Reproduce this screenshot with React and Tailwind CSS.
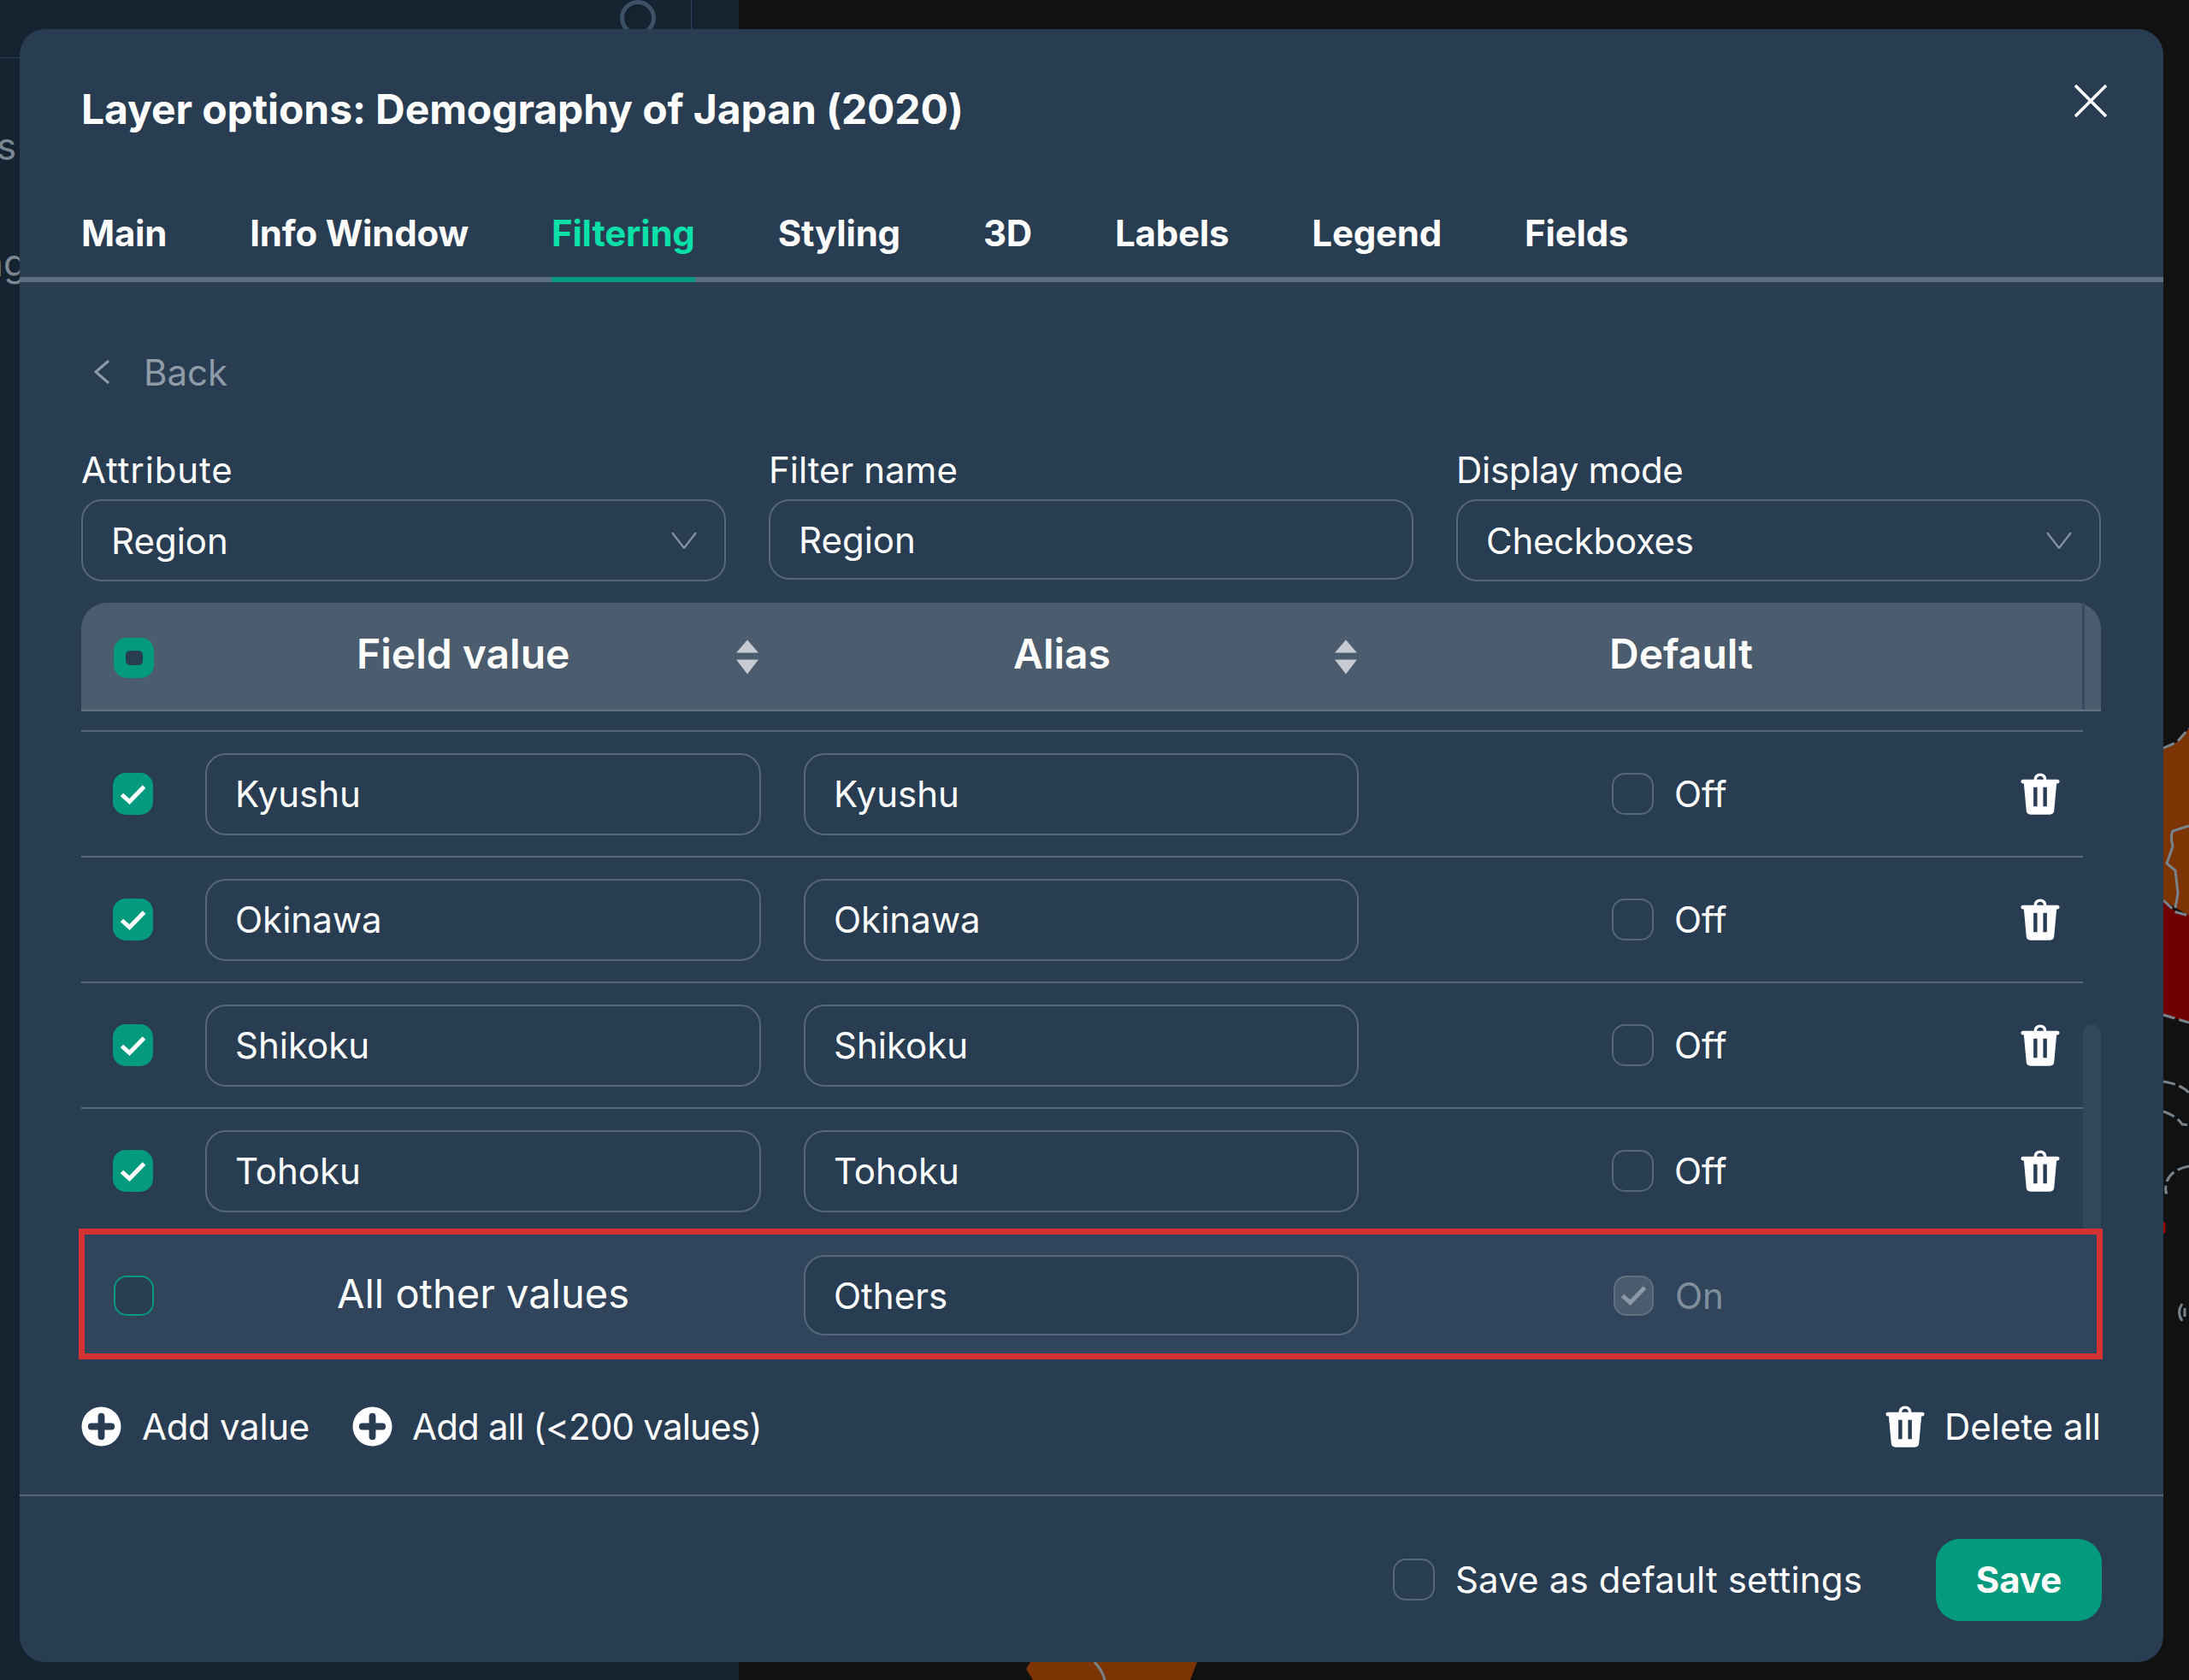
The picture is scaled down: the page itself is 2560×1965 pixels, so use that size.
const F = "font-['Inter','Noto_Sans',sans-serif]";

function Check({ className = "" }) {
  return (
    <svg viewBox="0 0 30 24" className={className} fill="none" stroke="currentColor" strokeWidth="5">
      <path d="M2 12.5 L11 20.5 L28 3" />
    </svg>
  );
}

function Trash({ className = "" }) {
  return (
    <svg viewBox="0 0 46 50" className={className} fill="currentColor">
      <path fillRule="evenodd" d="M15.5 8 C15.5 3.5 18.5 0.5 23 0.5 C27.5 0.5 30.5 3.5 30.5 8 L43.5 8 C45 8 46 9 46 10.3 C46 11.7 45 12.7 43.5 12.7 L42.5 12.7 L39.6 45 C39.4 47.8 37.5 49.8 34.5 49.8 L11.5 49.8 C8.5 49.8 6.6 47.8 6.4 45 L3.5 12.7 L2.5 12.7 C1 12.7 0 11.7 0 10.3 C0 9 1 8 2.5 8 Z M19 8 L27 8 C27 5.5 25.5 3.8 23 3.8 C20.5 3.8 19 5.5 19 8 Z M15 17 L15 40 L19.5 40 L19.5 17 Z M26.5 17 L26.5 40 L31 40 L31 17 Z" />
    </svg>
  );
}

function PlusCircle() {
  return (
    <svg viewBox="0 0 48 48" className="w-[47px] h-[47px] shrink-0">
      <circle cx="24" cy="24" r="23.5" fill="#fff" />
      <path d="M24 12 V36 M12 24 H36" stroke="#283c52" strokeWidth="8" strokeLinecap="round" />
    </svg>
  );
}

function Sort({ className = "" }) {
  return (
    <svg viewBox="0 0 28 40" className={className} fill="#c6ccd2">
      <path d="M14 0 L27 15 L1 15 Z" />
      <path d="M1 23 L27 23 L14 40 Z" />
    </svg>
  );
}

function Chevron() {
  return (
    <svg viewBox="0 0 30 20" className="w-[30px] h-[20px] text-[#8593a0]" fill="none" stroke="currentColor" strokeWidth="2.2">
      <path d="M1 1 L15 19 L29 1" />
    </svg>
  );
}

function Field({ label, value, select, h = "h-[96px]", labelClass = "", valueClass = "" }) {
  return (
    <div className="flex-1 flex flex-col">
      <div className={`h-[59px] text-[42px] leading-[49px] text-white ${labelClass}`}>{label}</div>
      <div className={`${h} rounded-[24px] border-2 border-[#55687b] flex items-center justify-between pl-[33px] pr-[32px] text-[42px] text-white`}>
        <span className={valueClass}>{value}</span>
        {select && <Chevron />}
      </div>
    </div>
  );
}

function Input({ value, className = "" }) {
  return (
    <div className={`h-[96px] rounded-[24px] border-2 border-[#55687b] flex items-center pl-[33px] text-[42px] text-white ${className}`}>
      {value}
    </div>
  );
}

function Row({ name }) {
  return (
    <div className="h-[147px] border-t-2 border-[#55687b] flex items-center">
      <div className="w-[145px] pl-[37px] shrink-0">
        <div className="w-[47px] h-[49px] rounded-[15px] bg-[#049a7d] flex items-center justify-center text-white">
          <Check className="w-[31px] h-[24px]" />
        </div>
      </div>
      <Input value={name} className="w-[650px]" />
      <Input value={name} className="w-[649px] ml-[50px]" />
      <div className="w-[49px] h-[49px] ml-[296px] rounded-[15px] border-2 border-[#55687b]" />
      <span className="ml-[24px] w-[62px] text-[42px] text-white">Off</span>
      <Trash className="w-[46px] h-[49px] ml-[343px] text-white" />
    </div>
  );
}

export default function App() {
  return (
    <div className={`${F} relative w-[2560px] h-[1965px] overflow-hidden flex bg-[#111111]`}>
      <div className="w-[864px] h-full bg-[#15222f] relative">
        <div className="h-[68px] border-b border-[#22405c]" />
        <div className="absolute left-[725px] top-[0px] w-[42px] h-[42px] rounded-full border-[5px] border-[#3c5165]" />
        <div className="absolute left-[808px] top-0 w-px h-[34px] bg-[#2a4460]" />
        <span className="absolute left-[-4px] top-[138px] text-[44px] text-[#7b8792]">s</span>
        <span className="absolute left-[-22px] top-[274px] text-[44px] text-[#7b8792]">ng</span>
      </div>
      <svg className="flex-1 h-full" viewBox="864 0 1696 1965" fill="none">
        <path d="M2530 875 L2546 868 L2560 852 L2560 1071 L2530 1053 Z" fill="#7d3404" />
        <path d="M2530 1053 L2545 1067 L2560 1071 L2560 1196 L2530 1187 Z" fill="#700000" />
        <path d="M1205 1944 L1400 1944 L1392 1965 L1208 1965 L1200 1952 Z" fill="#7d3404" />
        <g stroke="#77838d" strokeWidth="3" strokeDasharray="14 5">
          <path d="M2530 875 L2546 868 L2560 852" />
          <path d="M2530 1187 L2560 1196" />
          <path d="M2530 1053 L2545 1067 L2560 1071" />
          <path d="M2530 1265 Q2550 1268 2560 1278" />
          <path d="M2530 1300 Q2545 1305 2552 1315 L2560 1316" />
          <path d="M2560 1364 Q2530 1370 2533 1395 L2535 1395" />
        </g>
        <path d="M2560 966 L2541 972 Q2538 978 2541 990 L2534 1010 L2544 1018 L2547 1045 L2544 1062" stroke="#77838d" strokeWidth="3" />
        <path d="M2552 1525 Q2545 1535 2552 1545 M2555 1530 L2555 1540" stroke="#77838d" strokeWidth="3" />
        <path d="M2531 1430 L2531 1442" stroke="#a00000" strokeWidth="3" />
        <path d="M1280 1944 Q1290 1955 1292 1965" stroke="#77838d" strokeWidth="3" />
      </svg>

      <div className="absolute left-[23px] top-[34px] w-[2507px] h-[1910px] rounded-[30px] bg-[#283c52] flex flex-col text-white">
        <div className="h-[296px] shrink-0 border-b-[6px] border-[#5b6e80] relative">
          <h1 className="absolute left-[72px] top-[62px] text-[48px] leading-[64px] font-bold tracking-[-0.1px]">
            Layer options: Demography of Japan (2020)
          </h1>
          <svg viewBox="0 0 40 40" className="absolute right-[66px] top-[65px] w-[38px] h-[38px]" stroke="#fff" strokeWidth="3.8" fill="none">
            <path d="M1 1 L39 39 M39 1 L1 39" />
          </svg>
          <div className="absolute left-[72px] top-[209px] flex gap-[97px] text-[42px] leading-[60px] font-bold tracking-[-0.2px]">
            <span>Main</span>
            <span>Info Window</span>
            <span className="relative text-[#0ae0a8]">
              Filtering
              <span className="absolute left-0 right-0 top-[81px] h-[6px] bg-[#049a7d]" />
            </span>
            <span>Styling</span>
            <span>3D</span>
            <span>Labels</span>
            <span>Legend</span>
            <span>Fields</span>
          </div>
        </div>

        <div className="flex-1 pl-[72px] pr-[73px] flex flex-col">
          <div className="flex items-center mt-[75px] h-[60px] text-[42px] text-[#8f9ba6]">
            <svg viewBox="0 0 20 30" className="w-[20px] h-[30px] ml-[14px]" fill="none" stroke="currentColor" strokeWidth="3">
              <path d="M18 2 L3 15 L18 28" />
            </svg>
            <span className="ml-[39px]">Back</span>
          </div>

          <div className="flex gap-[50px] mt-[60px]">
            <Field label="Attribute" value="Region" select labelClass="tracking-[0.9px]" />
            <Field label="Filter name" value="Region" h="h-[94px]" />
            <Field label="Display mode" value="Checkboxes" select labelClass="tracking-[-0.3px]" valueClass="tracking-[-0.3px]" />
          </div>

          <div className="mt-[25px] h-[127px] rounded-t-[30px] bg-[#4a5c6d] border-b-2 border-[#62727f] flex items-center pb-[6px] relative text-[48px] font-semibold">
            <div className="absolute left-[38px] top-[41px] w-[47px] h-[47px] rounded-[15px] bg-[#049a7d] flex items-center justify-center">
              <div className="w-[20px] h-[17px] rounded-[5px] bg-[#283c52]" />
            </div>
            <span className="absolute left-[322px]">Field value</span>
            <Sort className="absolute left-[765px] top-[43px] w-[28px] h-[41px]" />
            <span className="absolute left-[1090px]">Alias</span>
            <Sort className="absolute left-[1465px] top-[43px] w-[28px] h-[41px]" />
            <span className="absolute left-[1787px]">Default</span>
            <div className="absolute left-[2340px] top-0 bottom-0 w-[3px] bg-[#334a60]" />
          </div>

          <div className="relative mt-[22px]">
            <div className="absolute right-0 top-[344px] w-[21px] h-[390px] bg-[#32475c] rounded-t-[10px]" />
            <div className="w-[2341px]">
              <Row name="Kyushu" />
              <Row name="Okinawa" />
              <Row name="Shikoku" />
              <Row name="Tohoku" />
            </div>
          </div>

          <div className="mx-[-3px] mr-[-2px] -mt-[5px] h-[153px] border-[7px] border-[#d33333] bg-[#30455b] flex items-center pt-[3px] relative z-10">
            <div className="w-[141px] pl-[34px] shrink-0">
              <div className="w-[47px] h-[47px] rounded-[15px] border-2 border-[#049a7d] bg-[#283c52]" />
            </div>
            <div className="w-[650px] mb-[3px] text-center text-[47px]">All other values</div>
            <Input value="Others" className="w-[649px] ml-[50px] !h-[94px] bg-[#283c52]" />
            <div className="w-[47px] h-[47px] ml-[298px] rounded-[15px] border-2 border-[#5f7180] bg-[#4a5c6d] flex items-center justify-center text-[#8b9aa6]">
              <Check className="w-[31px] h-[24px]" />
            </div>
            <span className="ml-[25px] text-[42px] text-[#7f8f9c]">On</span>
          </div>

          <div className="flex items-center mt-[53px] h-[50px] text-[42px]">
            <PlusCircle />
            <span className="ml-[24px] tracking-[-0.3px]">Add value</span>
            <div className="ml-[50px]"><PlusCircle /></div>
            <span className="ml-[23px] tracking-[-0.8px]">Add all (&lt;200 values)</span>
            <Trash className="w-[46px] h-[49px] ml-auto" />
            <span className="ml-[23px]">Delete all</span>
          </div>
        </div>

        <div className="h-[196px] shrink-0 border-t-2 border-[#55687b] flex items-center pt-[1px] pr-[72px] text-[42px]">
          <div className="w-[49px] h-[49px] ml-auto rounded-[15px] border-2 border-[#55687b]" />
          <span className="ml-[24px] tracking-[0.15px]">Save as default settings</span>
          <div className="ml-[86px] w-[194px] h-[96px] rounded-[28px] bg-[#049a7d] flex items-center justify-center font-bold">Save</div>
        </div>
      </div>
    </div>
  );
}
